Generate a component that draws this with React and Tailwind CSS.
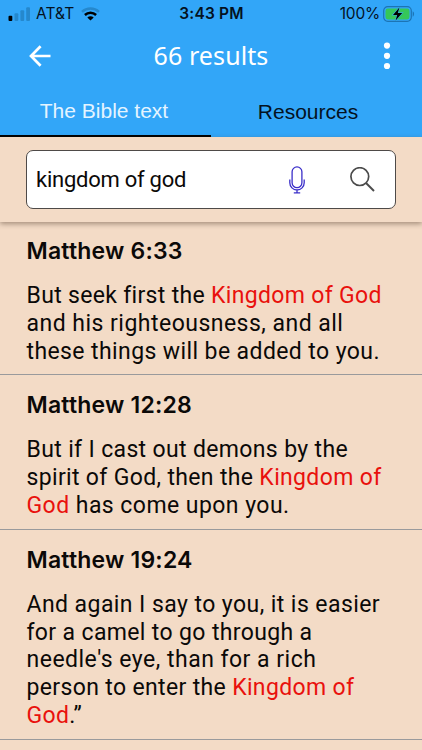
import React from 'react';

const results = [
  {
    ref: 'Matthew 6:33',
    lines: [
      { track: 'tracking-[0.32px]', parts: [{ text: 'But seek first the ' }, { text: 'Kingdom of God', hit: true }] },
      { track: 'tracking-[0.48px]', parts: [{ text: 'and his righteousness, and all' }] },
      { track: 'tracking-[0.4px]', parts: [{ text: 'these things will be added to you.' }] },
    ],
  },
  {
    ref: 'Matthew 12:28',
    lines: [
      { track: 'tracking-[0.35px]', parts: [{ text: 'But if I cast out demons by the' }] },
      { track: 'tracking-[0.34px]', parts: [{ text: 'spirit of God, then the ' }, { text: 'Kingdom of', hit: true }] },
      { track: 'tracking-[0.45px]', parts: [{ text: 'God', hit: true }, { text: ' has come upon you.' }] },
    ],
  },
  {
    ref: 'Matthew 19:24',
    lines: [
      { track: 'tracking-[0.43px]', parts: [{ text: 'And again I say to you, it is easier' }] },
      { track: 'tracking-[0.36px]', parts: [{ text: 'for a camel to go through a' }] },
      { track: 'tracking-[0.49px]', parts: [{ text: 'needle\'s eye, than for a rich' }] },
      { track: 'tracking-[0.35px]', parts: [{ text: 'person to enter the ' }, { text: 'Kingdom of', hit: true }] },
      { track: 'tracking-[0.3px]', parts: [{ text: 'God', hit: true }, { text: '.”' }] },
    ],
  },
];

function SignalIcon() {
  return (
    <svg width="22" height="14" viewBox="0 0 22 14">
      <rect x="0.5" y="8.8" width="3.8" height="5.2" rx="1" fill="#000" />
      <g fill="#2588cd">
        <rect x="6.5" y="6.2" width="3.8" height="7.8" rx="1" />
        <rect x="12.4" y="3.2" width="3.8" height="10.8" rx="1" />
        <rect x="18.2" y="0.2" width="3.8" height="13.8" rx="1" />
      </g>
    </svg>
  );
}

function WifiIcon() {
  return (
    <svg width="19" height="14" viewBox="0 0 19 14" fill="none" strokeWidth="2.5">
      <path d="M1 4.8C5.7 0.4 13.3 0.4 18 4.8" stroke="#2588cd" />
      <path d="M3.9 8C7.1 5 11.9 5 15.1 8" stroke="#000" />
      <path d="M9.5 13.6L6.3 10.4C8.1 8.8 10.9 8.8 12.7 10.4Z" fill="#000" />
    </svg>
  );
}

function BatteryIcon() {
  return (
    <svg width="32" height="16" viewBox="0 0 32 16">
      <rect x="0.7" y="0.7" width="27.6" height="14.6" rx="4" fill="none" stroke="#1c74b4" strokeWidth="1.2" />
      <rect x="2.5" y="2.5" width="24" height="11" rx="2.4" fill="#35c759" />
      <path d="M29.7 5.3C31.5 6 31.5 10 29.7 10.7Z" fill="#1c74b4" />
      <path d="M16.4 1.6L10 8.9h4.2L12.6 14.4l6.6-7.5h-4.4Z" fill="#000" stroke="#35b0d8" strokeWidth="1.4" paintOrder="stroke" />
    </svg>
  );
}

function BackIcon() {
  return (
    <svg width="22" height="22" viewBox="0 0 22 22" fill="none" stroke="#fff" strokeWidth="2.7">
      <path d="M21.5 11H2.2M11.6 1.2L2 11l9.6 9.8" />
    </svg>
  );
}

function MoreIcon() {
  return (
    <svg width="8" height="28" viewBox="0 0 8 28" fill="#fff">
      <circle cx="4" cy="3.6" r="3.1" />
      <circle cx="4" cy="13.8" r="3.1" />
      <circle cx="4" cy="24" r="3.1" />
    </svg>
  );
}

function MicIcon() {
  return (
    <svg width="16" height="28" viewBox="0 0 16 28" fill="none" stroke="#3b2fc9" strokeWidth="1.3">
      <rect x="3.1" y="0.9" width="9.8" height="20.8" rx="4.9" />
      <path d="M0.8 13.4v3.4a7.2 7.2 0 0 0 14.4 0v-3.4M8 24v3M4.8 26.9h6.4" />
    </svg>
  );
}

function SearchIcon() {
  return (
    <svg width="25" height="25" viewBox="0 0 25 25" fill="none" stroke="#4b4b4b" strokeWidth="1.7">
      <circle cx="9.8" cy="9.6" r="8.9" />
      <path d="M16 16l8 8" strokeWidth="2" />
    </svg>
  );
}

function StatusBar() {
  return (
    <div className="grid h-7 grid-cols-3 items-center pr-[7px] pl-2 font-['Inter','Liberation_Sans',sans-serif] text-[15.5px] text-[#04121f]">
      <div className="flex items-center">
        <SignalIcon />
        <span className="ml-1.5 tracking-[0.1px]">AT&amp;T</span>
        <span className="ml-[7px]"><WifiIcon /></span>
      </div>
      <div className="text-center font-semibold tracking-[0.2px] whitespace-nowrap">3:43 PM</div>
      <div className="flex items-center justify-end">
        <span className="mr-[3px] tracking-[-0.2px]">100%</span>
        <BatteryIcon />
      </div>
    </div>
  );
}

function Result({ item }) {
  return (
    <article className="border-b border-[#999a9c] pt-[14px] pr-4 pb-[9px] pl-[26.5px] first:pt-[13px]">
      <h2 className="h-[33px] font-['Inter','Liberation_Sans',sans-serif] text-[23px] leading-[33px] font-semibold tracking-[0.2px]">{item.ref}</h2>
      <p className="mt-[14px] font-['Roboto',sans-serif] text-[23px] leading-[27.8px] whitespace-pre">
        {item.lines.map((line, i) => (
          <span key={i} className={`block ${line.track}`}>
            {line.parts.map((part, j) => (
              <span key={j} className={part.hit ? 'text-[#e9110d]' : ''}>{part.text}</span>
            ))}
          </span>
        ))}
      </p>
    </article>
  );
}

export default function App() {
  return (
    <div className="flex h-[750px] w-[422px] flex-col overflow-hidden bg-[#f3dbc6] text-[#0b0908]">
      <header className="h-[137px] shrink-0 bg-[#32a6f8]">
        <StatusBar />
        <div className="grid h-[56px] grid-cols-[1fr_auto_1fr] items-center pr-[29px] pl-[29px]">
          <button aria-label="Back"><BackIcon /></button>
          <h1 className="font-['Noto_Sans',sans-serif] text-[25px] tracking-[0.1px] text-white">66 results</h1>
          <button aria-label="More" className="mr-0.5 justify-self-end"><MoreIcon /></button>
        </div>
        <nav className="grid h-[53px] grid-cols-2 font-['Liberation_Sans',sans-serif] text-[21px]">
          <button className="border-b-2 border-black pt-1.5 pr-[3px] pb-[3px] text-[#e4f4ff]">The Bible text</button>
          <button className="pt-[5px] pr-[17px] pb-0.5 text-[#04121f]">Resources</button>
        </nav>
      </header>

      <section className="z-10 h-[85px] shrink-0 bg-[#f3dbc6] px-[26px] pt-[13px] shadow-[0_2px_5px_rgba(70,50,35,0.45)]">
        <div className="flex h-[59px] items-center rounded-[7px] border border-[#4e4a48] bg-white pr-5 pl-[9px]">
          <span className="flex-1 font-['Roboto',sans-serif] text-[22px] tracking-[-0.25px]">kingdom of god</span>
          <button aria-label="Voice search" className="mr-[45px]"><MicIcon /></button>
          <button aria-label="Search"><SearchIcon /></button>
        </div>
      </section>

      <main>
        {results.map((item) => (
          <Result key={item.ref} item={item} />
        ))}
      </main>
    </div>
  );
}
